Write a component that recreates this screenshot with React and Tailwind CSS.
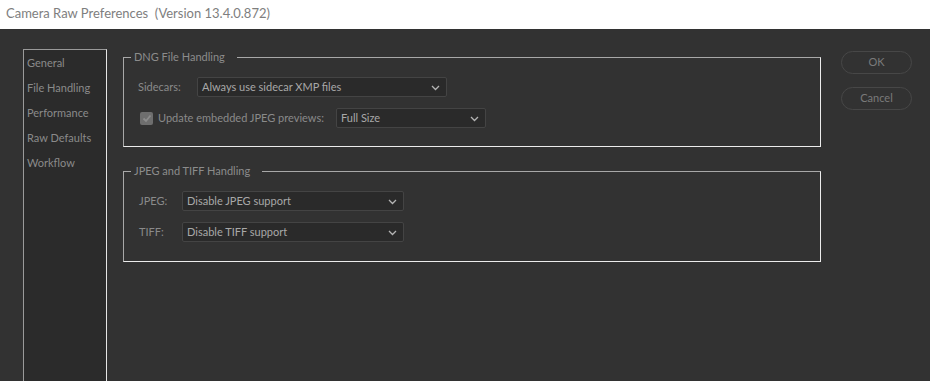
import React from "react";

const font = { fontFamily: 'Lato, "Noto Sans", sans-serif' };

function Chevron() {
  return (
    <svg width="9" height="6" viewBox="0 0 9 6" className="shrink-0">
      <polyline points="1,1 4.5,4.5 8,1" fill="none" stroke="#b4b4b4" strokeWidth="1.3" />
    </svg>
  );
}

function Select({ text, className }) {
  return (
    <div className={"flex h-[20px] items-center justify-between rounded-[2px] border border-[#444444] bg-[#2a2a2a] pl-[4px] pr-[6px] pt-[1px] text-[11px] text-[#a8a8a8] " + className}>
      <span>{text}</span>
      <Chevron />
    </div>
  );
}

function Group({ title, children, className }) {
  return (
    <fieldset className={"border-t border-l border-t-[#a8a8a8] border-l-[#a8a8a8] border-r border-b border-r-[#ececec] border-b-[#ececec] " + className}>
      <legend className="ml-[7px] pl-[3px] pr-[12px] text-[11px] leading-[14px] text-[#8c8c8c]">{title}</legend>
      {children}
    </fieldset>
  );
}

export default function App() {
  return (
    <div className="flex h-[381px] w-[930px] flex-col overflow-hidden bg-[#323232]" style={font}>
      <div className="flex h-[29px] shrink-0 items-center bg-white pl-[6px] pb-[2px] text-[13px] text-[#7e7e7e]">
        Camera Raw Preferences&nbsp;&nbsp;(Version 13.4.0.872)
      </div>
      <div className="flex flex-1">
        <div className="ml-[23px] mt-[20px] w-[84px] border-l border-t border-l-[#9a9a9a] border-t-[#9a9a9a] border-r border-r-[#e6e6e6] bg-[#2b2b2b] pt-[5px] pl-[3px]">
          {["General", "File Handling", "Performance", "Raw Defaults", "Workflow"].map((t) => (
            <div key={t} className="h-[25px] text-[11px] leading-[16px] text-[#8a8a8a]">{t}</div>
          ))}
        </div>
        <div className="ml-[16px] mt-[21px] flex w-[698px] flex-col">
          <Group title="DNG File Handling" className="h-[97px] pt-[13px]">
            <div className="flex items-center pl-[14px]">
              <span className="w-[59px] pt-[1px] text-[11px] text-[#8a8a8a]">Sidecars:</span>
              <Select text="Always use sidecar XMP files" className="w-[250px]" />
            </div>
            <div className="mt-[11px] flex items-center pl-[16px]">
              <div className="flex h-[13px] w-[13px] items-center justify-center rounded-[2px] bg-[#6e6e6e]">
                <svg width="10" height="9" viewBox="0 0 10 9">
                  <polyline points="1.5,4.5 4,7 8.5,1.5" fill="none" stroke="#8c8c8c" strokeWidth="1.8" />
                </svg>
              </div>
              <span className="ml-[5px] w-[178px] pt-[1px] text-[11px] text-[#8a8a8a]">Update embedded JPEG previews:</span>
              <Select text="Full Size" className="w-[150px]" />
            </div>
          </Group>
          <Group title="JPEG and TIFF Handling" className="mt-[17px] h-[98px] pt-[13px]">
            <div className="flex items-center pl-[15px]">
              <span className="w-[43px] pt-[1px] text-[11px] text-[#8a8a8a]">JPEG:</span>
              <Select text="Disable JPEG support" className="w-[222px]" />
            </div>
            <div className="mt-[11px] flex items-center pl-[15px]">
              <span className="w-[43px] pt-[1px] text-[11px] text-[#8a8a8a]">TIFF:</span>
              <Select text="Disable TIFF support" className="w-[222px]" />
            </div>
          </Group>
        </div>
        <div className="ml-[20px] mt-[22px] flex flex-col gap-[13px]">
          <div className="flex h-[23px] w-[71px] items-center justify-center rounded-full border border-[#474747] text-[11px] text-[#7a7a7a]">OK</div>
          <div className="flex h-[23px] w-[71px] items-center justify-center rounded-full border border-[#474747] text-[11px] text-[#7a7a7a]">Cancel</div>
        </div>
      </div>
    </div>
  );
}
